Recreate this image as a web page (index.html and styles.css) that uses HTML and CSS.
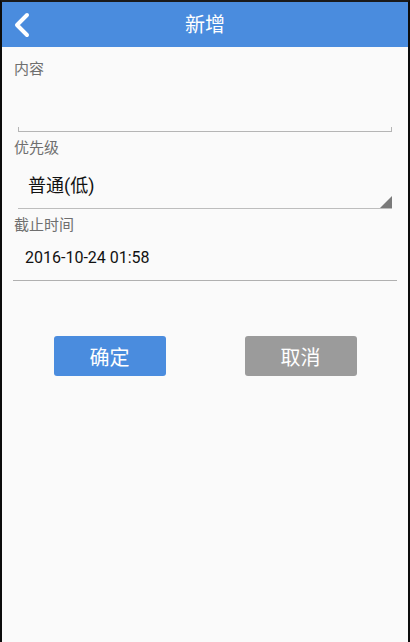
FILE: index.html
```html
<!DOCTYPE html>
<html lang="zh">
<head>
<meta charset="utf-8">
<link rel="stylesheet" href="styles.css">
</head>
<body>
<div class="app">
  <header class="header">
    <div class="back">
      <svg width="20" height="26" viewBox="0 0 20 26"><path d="M15 3 L5 13 L15 23" fill="none" stroke="#fff" stroke-width="4" stroke-linecap="round" stroke-linejoin="round"/></svg>
    </div>
    <div class="title">新增</div>
    <div></div>
  </header>
  <main class="form">
    <div class="label first">内容</div>
    <div class="edit"><div class="edit-line"></div></div>
    <div class="label">优先级</div>
    <div class="spinner"><span class="spinner-text">普通(低)</span><span class="tri"></span></div>
    <div class="label">截止时间</div>
    <div class="date">2016-10-24 01:58</div>
    <div class="buttons">
      <div class="btn ok">确定</div>
      <div class="btn cancel">取消</div>
    </div>
  </main>
</div>
</body>
</html>
```

FILE: styles.css
```css
html, body { margin: 0; padding: 0; }
body { font-family: Roboto, "Noto Sans CJK SC", sans-serif; background: #111; }
.app {
  width: 410px; height: 642px; box-sizing: border-box;
  border-left: 2px solid #0c0c0c; border-right: 2px solid #0c0c0c; border-top: 2px solid #1a1a1a;
  background: #fafafa; display: flex; flex-direction: column;
}
.header {
  height: 45px; background: #4a8cde; display: grid;
  grid-template-columns: 1fr auto 1fr; align-items: center;
}
.back { padding-left: 10px; display: flex; align-items: center; padding-top: 1px; }
.title { color: #fff; font-size: 20px; line-height: 24px; }
.form { padding: 0 11px 0 12px; display: flex; flex-direction: column; }
.label { color: #6f6f6f; font-size: 15px; line-height: 20px; margin-top: 6px; }
.label.first { margin-top: 12px; }
.edit { height: 53px; display: flex; align-items: flex-end; padding: 0 5px 0 4px; }
.edit-line { flex: 1; height: 4px; border: 1px solid #b5b5b5; border-top: none; }
.spinner {
  position: relative; margin: 0 5px 0 4px; height: 50px; border-bottom: 1px solid #bdbdbd;
  box-sizing: content-box; padding: 0;
}
.spinner-text { display: block; padding: 17px 0 0 10px; font-size: 18px; line-height: 22px; color: #111; }
.tri {
  position: absolute; right: 0; bottom: 0; width: 0; height: 0;
  border-style: solid; border-width: 0 0 12px 12px; border-color: transparent transparent #7a7a7a transparent;
}
.date {
  height: 45px; box-sizing: content-box; border-bottom: 1px solid #b0b0b0; margin: 0 0 0 -1px;
  padding-left: 12px; font-size: 16px; line-height: 45px; color: #111;
}
.buttons { display: flex; justify-content: center; gap: 79px; margin-top: 55px; padding-right: 1px; }
.btn {
  width: 112px; height: 40px; border-radius: 3px; color: #fff; font-size: 20px;
  display: flex; align-items: center; justify-content: center;
}
.ok { background: #4a8cde; }
.cancel { background: #9b9b9b; }
```
